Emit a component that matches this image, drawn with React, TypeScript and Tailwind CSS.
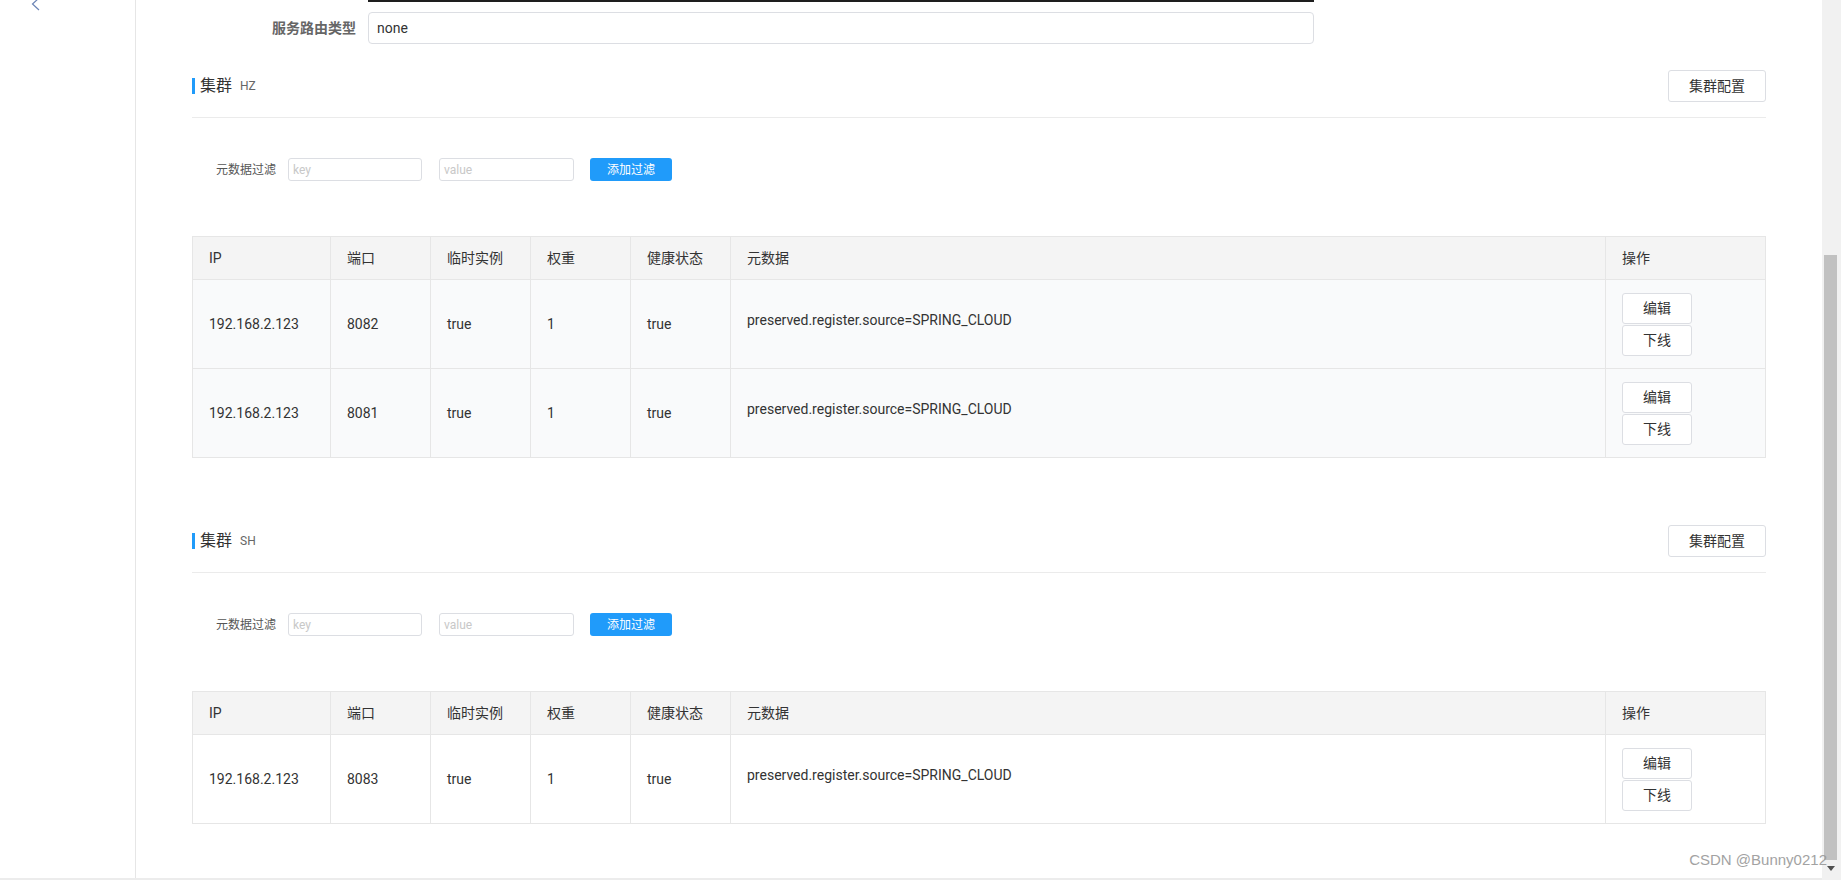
import React from 'react';

type Instance = { ip: string; port: string; ephemeral: string; weight: string; healthy: string; meta: string };

const clusters: { name: string; striped: boolean; rows: Instance[] }[] = [
    {
        name: 'HZ',
        striped: true,
        rows: [
            { ip: '192.168.2.123', port: '8082', ephemeral: 'true', weight: '1', healthy: 'true', meta: 'preserved.register.source=SPRING_CLOUD' },
            { ip: '192.168.2.123', port: '8081', ephemeral: 'true', weight: '1', healthy: 'true', meta: 'preserved.register.source=SPRING_CLOUD' },
        ],
    },
    {
        name: 'SH',
        striped: false,
        rows: [
            { ip: '192.168.2.123', port: '8083', ephemeral: 'true', weight: '1', healthy: 'true', meta: 'preserved.register.source=SPRING_CLOUD' },
        ],
    },
];

const font = { fontFamily: 'Roboto, "Noto Sans CJK SC", sans-serif' };

const Cell: React.FC<{ className?: string; children?: React.ReactNode }> = ({ className = '', children }) => (
    <div className={`flex items-center border-r border-b border-[#e6e6e6] pl-4 text-[14px] text-[#333] ${className}`}>{children}</div>
);

const ClusterBlock: React.FC<{ name: string; striped: boolean; rows: Instance[] }> = ({ name, striped, rows }) => {
    const rowBg = striped ? 'bg-[#f9fafb]' : 'bg-white';
    return (
        <div>
            <div className="flex items-center justify-between border-b border-[#ebebeb] pb-[15px]">
                <div className="flex items-center">
                    <div className="w-[3px] h-[16px] bg-[#209bfa]" />
                    <span className="ml-[5px] text-[16px] leading-[20px] text-[#333]">集群</span>
                    <span className="ml-[8px] text-[12px] text-[#666]">{name}</span>
                </div>
                <button className="w-[98px] h-[32px] rounded-[3px] border border-[#dcdee3] bg-white text-[14px] text-[#333]">集群配置</button>
            </div>

            <div className="flex items-center mt-[40px] pl-[24px] h-[23px]">
                <span className="text-[12px] text-[#555] w-[72px]">元数据过滤</span>
                <div className="w-[134px] h-[23px] rounded-[3px] border border-[#dcdee3] flex items-center pl-[4px] text-[12px] text-[#c8c8c8]">key</div>
                <div className="ml-[17px] w-[135px] h-[23px] rounded-[3px] border border-[#dcdee3] flex items-center pl-[4px] text-[12px] text-[#c8c8c8]">value</div>
                <button className="ml-[16px] w-[82px] h-[23px] rounded-[3px] bg-[#209bfa] text-white text-[12px]">添加过滤</button>
            </div>

            <div className="mt-[55px] border-t border-l border-[#e6e6e6]">
                <div className="flex h-[43px] bg-[#f4f4f4]">
                    <Cell className="w-[138px]">IP</Cell>
                    <Cell className="w-[100px]">端口</Cell>
                    <Cell className="w-[100px]">临时实例</Cell>
                    <Cell className="w-[100px]">权重</Cell>
                    <Cell className="w-[100px]">健康状态</Cell>
                    <Cell className="flex-1">元数据</Cell>
                    <Cell className="w-[160px]">操作</Cell>
                </div>
                {rows.map((r, i) => (
                    <div key={i} className={`flex h-[89px] ${rowBg}`}>
                        <Cell className="w-[138px]">{r.ip}</Cell>
                        <Cell className="w-[100px]">{r.port}</Cell>
                        <Cell className="w-[100px]">{r.ephemeral}</Cell>
                        <Cell className="w-[100px]">{r.weight}</Cell>
                        <Cell className="w-[100px]">{r.healthy}</Cell>
                        <Cell className="flex-1 pb-[8px]">{r.meta}</Cell>
                        <Cell className="w-[160px]">
                            <div className="flex flex-col gap-[1px]">
                                <button className="w-[70px] h-[31px] rounded-[3px] border border-[#dcdee3] bg-white text-[14px] text-[#333]">编辑</button>
                                <button className="w-[70px] h-[31px] rounded-[3px] border border-[#dcdee3] bg-white text-[14px] text-[#333]">下线</button>
                            </div>
                        </Cell>
                    </div>
                ))}
            </div>
        </div>
    );
};

const App: React.FC = () => {
    return (
        <div className="relative flex h-[880px] w-full overflow-hidden bg-white" style={font}>
            <div className="flex flex-1 flex-col">
                <div className="flex h-[878px]">
                    {/* sidebar */}
                    <div className="w-[136px] shrink-0 border-r border-[#e6e6e6] pl-[31px]">
                        <svg width="9" height="14" viewBox="0 0 9 14" className="-mt-[3px]">
                            <path d="M8 1 L1.5 7 L8 13" fill="none" stroke="#6b84b5" strokeWidth="1.2" />
                        </svg>
                    </div>

                    {/* main panel */}
                    <div className="flex-1 px-[56px]">
                        <div className="flex">
                            <div className="w-[176px] shrink-0 pr-[12px] pt-[12px] h-[44px] flex items-center justify-end text-[14px] font-bold text-[#666]">
                                服务路由类型
                            </div>
                            <div className="w-[946px]">
                                <div className="h-[2px] bg-[#1e1e1e]" />
                                <div className="mt-[10px] h-[32px] rounded-[4px] border border-[#dcdee3] flex items-center pl-[8px] text-[14px] text-[#333]">none</div>
                            </div>
                        </div>

                        <div className="mt-[26px]">
                            <ClusterBlock {...clusters[0]} />
                        </div>
                        <div className="mt-[67px]">
                            <ClusterBlock {...clusters[1]} />
                        </div>
                    </div>
                </div>
                <div className="h-[2px] bg-[#ececec]" />
            </div>

            {/* scrollbar */}
            <div className="w-[19px] shrink-0 bg-[#f1f1f1] flex flex-col pl-[2px] pr-[4px]">
                <div className="mt-[255px] h-[605px] bg-[#c1c1c1]" />
                <div className="flex justify-center mt-[6px]">
                    <svg width="8" height="5" viewBox="0 0 8 5"><path d="M0 0 L8 0 L4 5 Z" fill="#505050" /></svg>
                </div>
            </div>

            {/* watermark */}
            <div className="absolute right-[14px] bottom-[9px] text-[15px] text-[#999] opacity-90" style={{ fontFamily: '"Liberation Sans", sans-serif' }}>
                CSDN @Bunny0212
            </div>
        </div>
    );
};

export default App;
